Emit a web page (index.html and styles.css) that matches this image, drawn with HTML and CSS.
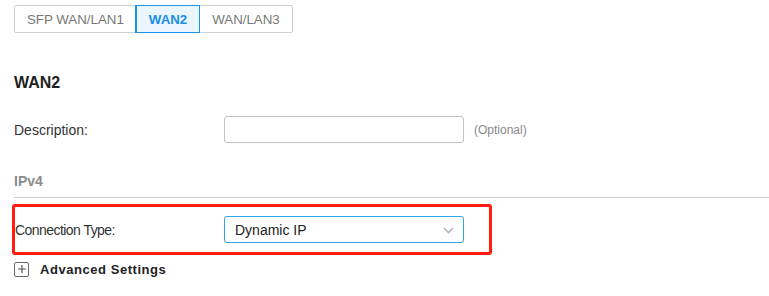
FILE: index.html
```html
<!DOCTYPE html>
<html>
<head>
<meta charset="utf-8">
<link rel="stylesheet" href="styles.css">
</head>
<body>
<div class="page">
  <div class="tabs">
    <div class="tab">SFP WAN/LAN1</div>
    <div class="tab active">WAN2</div>
    <div class="tab">WAN/LAN3</div>
  </div>

  <h2 class="title">WAN2</h2>

  <div class="row">
    <label class="label">Description:</label>
    <div class="input"></div>
    <span class="hint">(Optional)</span>
  </div>

  <div class="section">IPv4</div>

  <div class="highlight">
    <label class="label label-tight">Connection Type:</label>
    <div class="select">
      <span>Dynamic IP</span>
      <svg class="chevron" width="11" height="7" viewBox="0 0 11 7"><path d="M1 1 L5.5 5.5 L10 1" fill="none" stroke="#b3b3b3" stroke-width="1.6"/></svg>
    </div>
  </div>

  <div class="advanced">
    <span class="plus-box">
      <svg width="10" height="10" viewBox="0 0 10 10"><path d="M5 1 V9 M1 5 H9" stroke="#555" stroke-width="1.2"/></svg>
    </span>
    <span class="adv-text">Advanced Settings</span>
  </div>
</div>
</body>
</html>
```

FILE: styles.css
```css
* { box-sizing: border-box; }
html, body { margin: 0; padding: 0; background: #fff; }
body {
  font-family: "Liberation Sans", Arial, sans-serif;
  color: #333;
}
.page {
  padding: 5px 0 0 14px;
}
.tabs {
  display: inline-flex;
  border: 1px solid #cfcfcf;
  border-radius: 2px;
  height: 28px;
}
.tab {
  display: flex;
  align-items: center;
  padding: 0 12px;
  font-size: 13.3px;
  color: #777;
  border-left: 1px solid #cfcfcf;
}
.tab:first-child { border-left: none; }
.tab.active {
  color: #1a8fe3;
  font-weight: bold;
  background: #eaf5fd;
  outline: 1px solid #1a93ea;
  border-left-color: #1a93ea;
  position: relative;
  z-index: 1;
}
.title {
  margin: 40px 0 0 0;
  height: 20px;
  line-height: 20px;
  font-size: 16px;
  font-weight: bold;
  color: #222;
}
.row {
  display: flex;
  align-items: center;
  margin-top: 23px;
  height: 27px;
}
.label {
  width: 210px;
  font-size: 14px;
  color: #333;
}
.label-tight {
  width: 209px;
  letter-spacing: -0.55px;
}
.input {
  width: 240px;
  height: 27px;
  border: 1px solid #c4c4c4;
  border-radius: 3px;
}
.hint {
  margin-left: 10px;
  font-size: 12px;
  color: #888;
}
.section {
  margin-top: 28px;
  line-height: 20px;
  font-size: 14px;
  font-weight: bold;
  color: #8c8c8c;
  padding-bottom: 6px;
  border-bottom: 1px solid #cccccc;
}
.highlight {
  display: flex;
  align-items: center;
  width: 480px;
  margin: 6px 0 0 -2px;
  padding: 9px 0 9px 0;
  border: 3px solid #ff1d12;
  border-radius: 3px;
}
.select {
  display: flex;
  align-items: center;
  justify-content: space-between;
  width: 240px;
  height: 27px;
  padding: 0 9px 0 10px;
  border: 1px solid #2aa6ea;
  border-radius: 3px;
  font-size: 14px;
  color: #222;
}
.chevron { display: block; margin-top: 1px; }
.advanced {
  display: flex;
  align-items: center;
  margin-top: 4px;
  height: 20px;
}
.plus-box {
  display: flex;
  align-items: center;
  justify-content: center;
  width: 15px;
  height: 15px;
  border: 1px solid #666;
  border-radius: 2px;
}
.adv-text {
  margin-left: 11px;
  font-size: 13px;
  font-weight: bold;
  color: #222;
  letter-spacing: 0.55px;
}
```
